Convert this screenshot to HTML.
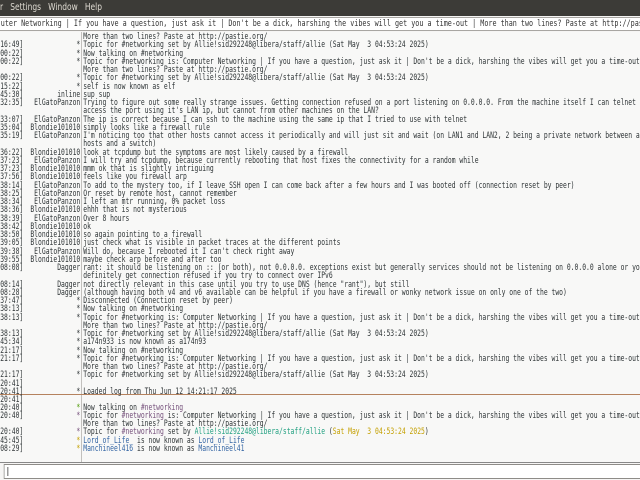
<!DOCTYPE html>
<html><head><meta charset="utf-8"><style>
*{margin:0;padding:0;box-sizing:border-box}
html,body{width:640px;height:480px;overflow:hidden;background:#f6f5f4}
#w{position:absolute;left:0;top:0;width:854px;height:480px;transform:scaleX(0.75);transform-origin:0 0;font-family:"DejaVu Sans Mono",monospace;font-size:8.5px;color:#2e3436}
#menu{position:absolute;left:0;top:0;width:854px;height:16px;background:#3c3b37;color:#dfdbd2;font-family:"DejaVu Sans","Liberation Sans",sans-serif;font-size:10px;line-height:16px;white-space:pre}
#topic{position:absolute;left:-2px;top:17px;width:858px;height:14px;border:1px solid #a8a6a2;background:#fff;line-height:12px;white-space:pre;overflow:hidden;padding-left:2px;color:#333;font-size:9px}
#chat{position:absolute;left:0;top:32px;width:854px;height:431px;background:#f8f8f7;border-bottom:1px solid #888;overflow:hidden}
#vline{position:absolute;left:108px;top:0;width:1px;height:431px;background:#b0aeaa}
.r{position:absolute;left:0;height:8.3px;line-height:8.3px;white-space:pre;width:854px}
.t{position:absolute;right:823px;text-align:right}
.n{position:absolute;right:747px;text-align:right}
.m{position:absolute;left:111px}
#sep{position:absolute;left:0;top:362px;width:854px;height:1px;background:#b5825e}
#input{position:absolute;left:5px;top:464px;width:854px;height:15px;border:1px solid #8e8c88;background:#fff}
#cur{position:absolute;left:4px;top:2px;width:1px;height:9px;background:#333}
.p{color:#75507b}.g{color:#4e9a06}.y{color:#c4a000}.b{color:#3465a4}.tg{color:#20a080}
</style></head><body><div id="w">
<div id="menu">r   Settings   Window   Help</div>
<div id="topic">uter Networking | If you have a question, just ask it | Don't be a dick, harshing the vibes will get you a time-out | More than two lines? Paste at http://pastie.org/</div>
<div id="chat">
<div id="vline"></div>
<div id="sep"></div>
<div class="r" style="top:1px"><span class="m">More than two lines? Paste at http://pastie.org/</span></div>
<div class="r" style="top:9.3px"><span class="t">[14:16:49]</span><span class="n">*</span><span class="m">Topic for #networking set by Allie!sid292248@libera/staff/allie (Sat May  3 04:53:24 2025)</span></div>
<div class="r" style="top:17.5px"><span class="t">[14:00:22]</span><span class="n">*</span><span class="m">Now talking on #networking</span></div>
<div class="r" style="top:25.8px"><span class="t">[14:00:22]</span><span class="n">*</span><span class="m">Topic for #networking is: Computer Networking | If you have a question, just ask it | Don't be a dick, harshing the vibes will get you a time-out</span></div>
<div class="r" style="top:34px"><span class="m">More than two lines? Paste at http://pastie.org/</span></div>
<div class="r" style="top:42.3px"><span class="t">[14:00:22]</span><span class="n">*</span><span class="m">Topic for #networking set by Allie!sid292248@libera/staff/allie (Sat May  3 04:53:24 2025)</span></div>
<div class="r" style="top:50.5px"><span class="t">[14:15:22]</span><span class="n">*</span><span class="m">self is now known as elf</span></div>
<div class="r" style="top:58.8px"><span class="t">[14:45:30]</span><span class="n">inline</span><span class="m">sup sup</span></div>
<div class="r" style="top:67px"><span class="t">[14:32:35]</span><span class="n">ElGatoPanzon</span><span class="m">Trying to figure out some really strange issues. Getting connection refused on a port listening on 0.0.0.0. From the machine itself I can telnet a</span></div>
<div class="r" style="top:75.3px"><span class="m">access the port using it's LAN ip, but cannot from other machines on the LAN?</span></div>
<div class="r" style="top:83.5px"><span class="t">[14:33:07]</span><span class="n">ElGatoPanzon</span><span class="m">The ip is correct because I can ssh to the machine using the same ip that I tried to use with telnet</span></div>
<div class="r" style="top:91.8px"><span class="t">[14:35:04]</span><span class="n">Blondie101010</span><span class="m">simply looks like a firewall rule</span></div>
<div class="r" style="top:100px"><span class="t">[14:35:19]</span><span class="n">ElGatoPanzon</span><span class="m">I'm noticing too that other hosts cannot access it periodically and will just sit and wait (on LAN1 and LAN2, 2 being a private network between a</span></div>
<div class="r" style="top:108.3px"><span class="m">hosts and a switch)</span></div>
<div class="r" style="top:116.5px"><span class="t">[14:36:22]</span><span class="n">Blondie101010</span><span class="m">look at tcpdump but the symptoms are most likely caused by a firewall</span></div>
<div class="r" style="top:124.8px"><span class="t">[14:37:23]</span><span class="n">ElGatoPanzon</span><span class="m">I will try and tcpdump, because currently rebooting that host fixes the connectivity for a random while</span></div>
<div class="r" style="top:133px"><span class="t">[14:37:23]</span><span class="n">Blondie101010</span><span class="m">mmm ok that is slightly intriguing</span></div>
<div class="r" style="top:141.3px"><span class="t">[14:37:56]</span><span class="n">Blondie101010</span><span class="m">feels like you firewall arp</span></div>
<div class="r" style="top:149.5px"><span class="t">[14:38:14]</span><span class="n">ElGatoPanzon</span><span class="m">To add to the mystery too, if I leave SSH open I can come back after a few hours and I was booted off (connection reset by peer)</span></div>
<div class="r" style="top:157.8px"><span class="t">[14:38:25]</span><span class="n">ElGatoPanzon</span><span class="m">Or reset by remote host, cannot remember</span></div>
<div class="r" style="top:166px"><span class="t">[14:38:34]</span><span class="n">ElGatoPanzon</span><span class="m">I left an mtr running, 0% packet loss</span></div>
<div class="r" style="top:174.3px"><span class="t">[14:38:36]</span><span class="n">Blondie101010</span><span class="m">ehhh that is not mysterious</span></div>
<div class="r" style="top:182.5px"><span class="t">[14:38:39]</span><span class="n">ElGatoPanzon</span><span class="m">Over 8 hours</span></div>
<div class="r" style="top:190.8px"><span class="t">[14:38:42]</span><span class="n">Blondie101010</span><span class="m">ok</span></div>
<div class="r" style="top:199px"><span class="t">[14:38:50]</span><span class="n">Blondie101010</span><span class="m">so again pointing to a firewall</span></div>
<div class="r" style="top:207.3px"><span class="t">[14:39:05]</span><span class="n">Blondie101010</span><span class="m">just check what is visible in packet traces at the different points</span></div>
<div class="r" style="top:215.5px"><span class="t">[14:39:38]</span><span class="n">ElGatoPanzon</span><span class="m">Will do, because I rebooted it I can't check right away</span></div>
<div class="r" style="top:223.8px"><span class="t">[14:39:55]</span><span class="n">Blondie101010</span><span class="m">maybe check arp before and after too</span></div>
<div class="r" style="top:232px"><span class="t">[14:08:08]</span><span class="n">Dagger</span><span class="m">rant: it should be listening on :: (or both), not 0.0.0.0. exceptions exist but generally services should not be listening on 0.0.0.0 alone or you</span></div>
<div class="r" style="top:240.3px"><span class="m">definitely get connection refused if you try to connect over IPv6</span></div>
<div class="r" style="top:248.5px"><span class="t">[14:08:14]</span><span class="n">Dagger</span><span class="m">not directly relevant in this case until you try to use DNS (hence "rant"), but still</span></div>
<div class="r" style="top:256.8px"><span class="t">[14:08:28]</span><span class="n">Dagger</span><span class="m">(although having both v4 and v6 available can be helpful if you have a firewall or wonky network issue on only one of the two)</span></div>
<div class="r" style="top:265px"><span class="t">[14:37:47]</span><span class="n">*</span><span class="m">Disconnected (Connection reset by peer)</span></div>
<div class="r" style="top:273.3px"><span class="t">[14:38:13]</span><span class="n">*</span><span class="m">Now talking on #networking</span></div>
<div class="r" style="top:281.5px"><span class="t">[14:38:13]</span><span class="n">*</span><span class="m">Topic for #networking is: Computer Networking | If you have a question, just ask it | Don't be a dick, harshing the vibes will get you a time-out</span></div>
<div class="r" style="top:289.8px"><span class="m">More than two lines? Paste at http://pastie.org/</span></div>
<div class="r" style="top:298px"><span class="t">[14:38:13]</span><span class="n">*</span><span class="m">Topic for #networking set by Allie!sid292248@libera/staff/allie (Sat May  3 04:53:24 2025)</span></div>
<div class="r" style="top:306.3px"><span class="t">[14:45:34]</span><span class="n">*</span><span class="m">a174n933 is now known as a174n93</span></div>
<div class="r" style="top:314.5px"><span class="t">[14:21:17]</span><span class="n">*</span><span class="m">Now talking on #networking</span></div>
<div class="r" style="top:322.8px"><span class="t">[14:21:17]</span><span class="n">*</span><span class="m">Topic for #networking is: Computer Networking | If you have a question, just ask it | Don't be a dick, harshing the vibes will get you a time-out</span></div>
<div class="r" style="top:331px"><span class="m">More than two lines? Paste at http://pastie.org/</span></div>
<div class="r" style="top:339.3px"><span class="t">[14:21:17]</span><span class="n">*</span><span class="m">Topic for #networking set by Allie!sid292248@libera/staff/allie (Sat May  3 04:53:24 2025)</span></div>
<div class="r" style="top:347.5px"><span class="t">[14:20:41]</span></div>
<div class="r" style="top:355.8px"><span class="t">[14:20:41]</span><span class="n">*</span><span class="m">Loaded log from Thu Jun 12 14:21:17 2025</span></div>
<div class="r" style="top:363.5px"><span class="t">[14:20:41]</span></div>
<div class="r" style="top:371.5px"><span class="t">[14:20:40]</span><span class="n g">*</span><span class="m">Now talking on <span class="p">#networking</span></span></div>
<div class="r" style="top:379.8px"><span class="t">[14:20:40]</span><span class="n p">*</span><span class="m">Topic for <span class="p">#networking</span> is: Computer Networking | If you have a question, just ask it | Don't be a dick, harshing the vibes will get you a time-out</span></div>
<div class="r" style="top:388px"><span class="m">More than two lines? Paste at http://pastie.org/</span></div>
<div class="r" style="top:396.3px"><span class="t">[14:20:40]</span><span class="n p">*</span><span class="m">Topic for <span class="p">#networking</span> set by <span class="tg">Allie!sid292248@libera/staff/allie</span> (<span class="y">Sat May  3 04:53:24 2025</span>)</span></div>
<div class="r" style="top:404.5px"><span class="t">[14:45:45]</span><span class="n y">*</span><span class="m"><span class="b">Lord_of_Life_</span> is now known as <span class="b">Lord_of_Life</span></span></div>
<div class="r" style="top:412.8px"><span class="t">[14:08:29]</span><span class="n y">*</span><span class="m"><span class="b">Manchineel416</span> is now known as <span class="b">Manchineel41</span></span></div>
</div>
<div id="input"><div id="cur"></div></div>
</div></body></html>
